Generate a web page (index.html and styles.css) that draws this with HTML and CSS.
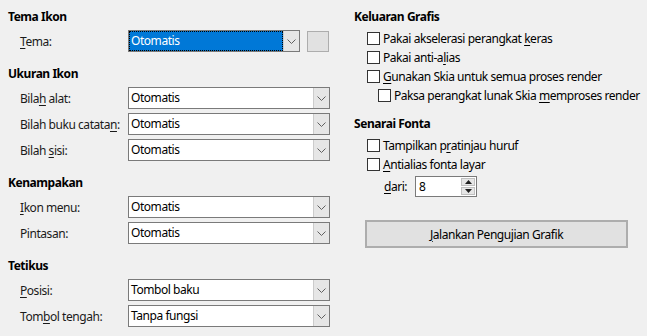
FILE: index.html
```html
<!DOCTYPE html>
<html>
<head>
<meta charset="utf-8">
<link rel="stylesheet" href="styles.css">
</head>
<body>
<div class="page">
  <div class="col left">
    <section class="sec">
      <h3 class="head">Tema Ikon</h3>
      <div class="rows">
        <div class="row">
          <span class="lbl"><u>T</u>ema:</span>
          <div class="combo sel focus"><span class="val">Otomatis</span><span class="drop"><svg width="9" height="5" viewBox="0 0 9 5"><path d="M0.5 0.5 L4.5 4.5 L8.5 0.5" fill="none" stroke="#606060" stroke-width="1"/></svg></span></div>
          <div class="sqbtn"></div>
        </div>
      </div>
    </section>
    <section class="sec">
      <h3 class="head">Ukuran Ikon</h3>
      <div class="rows">
        <div class="row">
          <span class="lbl">Bila<u>h</u> alat:</span>
          <div class="combo"><span class="val">Otomatis</span><span class="drop"><svg width="9" height="5" viewBox="0 0 9 5"><path d="M0.5 0.5 L4.5 4.5 L8.5 0.5" fill="none" stroke="#606060" stroke-width="1"/></svg></span></div>
        </div>
        <div class="row">
          <span class="lbl">Bilah buku catata<u>n</u>:</span>
          <div class="combo"><span class="val">Otomatis</span><span class="drop"><svg width="9" height="5" viewBox="0 0 9 5"><path d="M0.5 0.5 L4.5 4.5 L8.5 0.5" fill="none" stroke="#606060" stroke-width="1"/></svg></span></div>
        </div>
        <div class="row">
          <span class="lbl">Bilah <u>s</u>isi:</span>
          <div class="combo"><span class="val">Otomatis</span><span class="drop"><svg width="9" height="5" viewBox="0 0 9 5"><path d="M0.5 0.5 L4.5 4.5 L8.5 0.5" fill="none" stroke="#606060" stroke-width="1"/></svg></span></div>
        </div>
      </div>
    </section>
    <section class="sec">
      <h3 class="head">Kenampakan</h3>
      <div class="rows">
        <div class="row">
          <span class="lbl"><u>I</u>kon menu:</span>
          <div class="combo"><span class="val">Otomatis</span><span class="drop"><svg width="9" height="5" viewBox="0 0 9 5"><path d="M0.5 0.5 L4.5 4.5 L8.5 0.5" fill="none" stroke="#606060" stroke-width="1"/></svg></span></div>
        </div>
        <div class="row">
          <span class="lbl">Pintasan:</span>
          <div class="combo"><span class="val">Otomatis</span><span class="drop"><svg width="9" height="5" viewBox="0 0 9 5"><path d="M0.5 0.5 L4.5 4.5 L8.5 0.5" fill="none" stroke="#606060" stroke-width="1"/></svg></span></div>
        </div>
      </div>
    </section>
    <section class="sec">
      <h3 class="head">Tetikus</h3>
      <div class="rows">
        <div class="row">
          <span class="lbl"><u>P</u>osisi:</span>
          <div class="combo"><span class="val">Tombol baku</span><span class="drop"><svg width="9" height="5" viewBox="0 0 9 5"><path d="M0.5 0.5 L4.5 4.5 L8.5 0.5" fill="none" stroke="#606060" stroke-width="1"/></svg></span></div>
        </div>
        <div class="row">
          <span class="lbl">Tom<u>b</u>ol tengah:</span>
          <div class="combo"><span class="val">Tanpa fungsi</span><span class="drop"><svg width="9" height="5" viewBox="0 0 9 5"><path d="M0.5 0.5 L4.5 4.5 L8.5 0.5" fill="none" stroke="#606060" stroke-width="1"/></svg></span></div>
        </div>
      </div>
    </section>
  </div>

  <div class="col right">
    <section class="sec">
      <h3 class="head">Keluaran Grafis</h3>
      <div class="checks">
        <label class="chk"><span class="box"></span><span>Pakai akselerasi perangkat <u>k</u>eras</span></label>
        <label class="chk"><span class="box"></span><span>Pakai anti-a<u>l</u>ias</span></label>
        <label class="chk"><span class="box"></span><span><u>G</u>unakan Skia untuk semua proses render</span></label>
        <label class="chk sub"><span class="box"></span><span>Paksa perangkat lunak Skia <u>m</u>emproses render</span></label>
      </div>
    </section>
    <section class="sec fonts">
      <h3 class="head">Senarai Fonta</h3>
      <div class="checks">
        <label class="chk"><span class="box"></span><span>Tampilkan p<u>r</u>atinjau huruf</span></label>
        <label class="chk"><span class="box"></span><span><u>A</u>ntialias fonta layar</span></label>
        <div class="spinrow">
          <span class="lbl2"><u>d</u>ari:</span>
          <div class="spin">
            <span class="spinval">8</span>
            <span class="spinbtns">
              <span class="sb"><svg width="7" height="4" viewBox="0 0 7 4"><path d="M0 4 L3.5 0 L7 4Z" fill="#202020"/></svg></span>
              <span class="sb"><svg width="7" height="4" viewBox="0 0 7 4"><path d="M0 0 L3.5 4 L7 0Z" fill="#202020"/></svg></span>
            </span>
          </div>
        </div>
      </div>
    </section>
    <div class="btnwrap">
      <button class="btn"><u>J</u>alankan Pengujian Grafik</button>
    </div>
  </div>
</div>
</body>
</html>
```
FILE: styles.css
```css
* { box-sizing: border-box; }
html, body {
  margin: 0;
  padding: 0;
  background: #f0f0f0;
}
body {
  font-family: "Noto Sans", "Open Sans", sans-serif;
  font-size: 12px;
  letter-spacing: -0.45px;
  color: #000;
  width: 647px;
  height: 336px;
  overflow: hidden;
}
u { text-decoration: underline; text-underline-offset: 2px; }
.page {
  display: flex;
  padding: 9px 0 0 8px;
}
.col { display: flex; flex-direction: column; }
.left { width: 322px; gap: 14px; }
.right { margin-left: 24px; width: 285px; }
.head {
  margin: 0;
  font-size: 12px;
  font-weight: bold;
  line-height: 16px;
  height: 16px;
}
.rows {
  margin-top: 5px;
  display: flex;
  flex-direction: column;
  gap: 4px;
}
.row {
  display: flex;
  align-items: center;
  height: 22px;
  padding-left: 12px;
}
.lbl {
  width: 108px;
  flex: none;
  white-space: nowrap;
  color: #1a1a1a;
}
.combo {
  flex: 1;
  height: 22px;
  border: 1px solid #7a7a7a;
  background: #fff;
  display: flex;
  align-items: stretch;
}
.combo .val {
  flex: 1;
  padding-left: 2px;
  line-height: 20px;
  white-space: nowrap;
}
.combo .drop {
  width: 16px;
  background: #e6e6e6;
  border-left: 1px solid #cccccc;
  display: flex;
  align-items: center;
  justify-content: center;
}
.combo.sel { flex: none; width: 172px; border-color: #7a7a7a; }
.combo.sel .val {
  background: #0078d7;
  color: #fff;
  outline: 1px dotted #000;
  outline-offset: -1px;
}
.sqbtn {
  margin-left: 7px;
  width: 22px;
  height: 21px;
  border: 1px solid #adadad;
  background: #e1e1e1;
}

.checks {
  margin-top: 6px;
  display: flex;
  flex-direction: column;
  gap: 5px;
  padding-left: 13px;
}
.chk {
  display: flex;
  align-items: center;
  height: 14px;
  gap: 3px;
  white-space: nowrap;
}
.chk.sub { padding-left: 11px; }
.box {
  width: 13px;
  height: 13px;
  border: 1px solid #333;
  background: #fff;
  flex: none;
}
.fonts { margin-top: 14px; }
.spinrow {
  display: flex;
  align-items: center;
  padding-left: 17px;
  margin-top: 0;
  height: 21px;
}
.lbl2 { width: 31px; }
.spin {
  width: 62px;
  height: 21px;
  border: 1px solid #7a7a7a;
  background: #fff;
  display: flex;
}
.spinval { flex: 1; padding-left: 3px; line-height: 19px; }
.spinbtns {
  display: flex;
  flex-direction: column;
  width: 15px;
  padding: 1px 1px 1px 0;
  gap: 1px;
}
.sb {
  flex: 1;
  background: #e6e6e6;
  border: 1px solid #c0c0c0;
  display: flex;
  align-items: center;
  justify-content: center;
}
.btnwrap { margin-top: 23px; padding-left: 11px; }
.btn {
  width: 263px;
  height: 28px;
  border: 2px solid #adadad;
  background: #e1e1e1;
  font-family: inherit;
  font-size: 12px;
  letter-spacing: -0.45px;
  color: #000;
  padding: 0;
}
```
